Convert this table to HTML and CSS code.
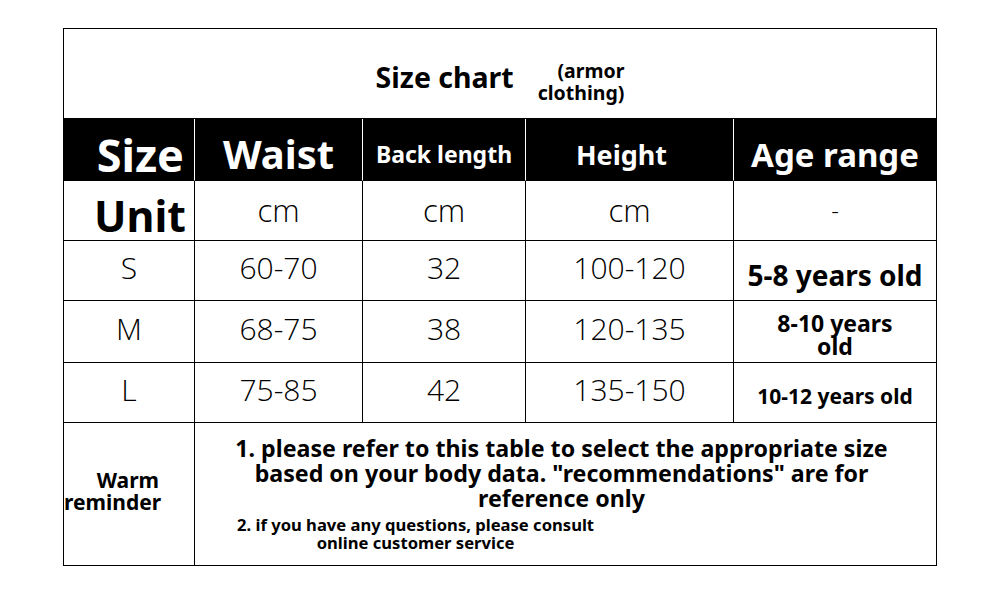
FILE: index.html
```html
<!DOCTYPE html>
<html lang="en">
<head>
<meta charset="utf-8">
<title>Size chart</title>
<link rel="stylesheet" href="styles.css">
</head>
<body>
<div class="page">
  <table class="chart">
    <colgroup>
      <col class="col1"><col class="col2"><col class="col3"><col class="col4"><col class="col5">
    </colgroup>
    <tr class="row-title">
      <td colspan="5" class="title-cell">
        <div class="title">
          <span class="title-main">Size chart</span>
          <span class="title-sub">(armor<br>clothing)</span>
        </div>
      </td>
    </tr>
    <tr class="row-head">
      <th class="h-size">Size</th>
      <th class="h-waist">Waist</th>
      <th class="h-back">Back length</th>
      <th class="h-height">Height</th>
      <th class="h-age">Age range</th>
    </tr>
    <tr class="row-unit">
      <td class="unit-label">Unit</td>
      <td class="val unit-val">cm</td>
      <td class="val unit-val">cm</td>
      <td class="val unit-val">cm</td>
      <td class="val unit-val dash">-</td>
    </tr>
    <tr class="row-s">
      <td class="val">S</td>
      <td class="val">60-70</td>
      <td class="val">32</td>
      <td class="val">100-120</td>
      <td class="age age-s">5-8 years old</td>
    </tr>
    <tr class="row-m">
      <td class="val">M</td>
      <td class="val">68-75</td>
      <td class="val">38</td>
      <td class="val">120-135</td>
      <td class="age age-m">8-10 years<br>old</td>
    </tr>
    <tr class="row-l">
      <td class="val">L</td>
      <td class="val">75-85</td>
      <td class="val">42</td>
      <td class="val">135-150</td>
      <td class="age age-l">10-12 years old</td>
    </tr>
    <tr class="row-note">
      <td class="note-label">Warm<br>reminder</td>
      <td colspan="4" class="note-cell">
        <div class="note-main">1. please refer to this table to select the appropriate size<br>based on your body data. "recommendations" are for<br>reference only</div>
        <div class="note-sub">2. if you have any questions, please consult<br>online customer service</div>
      </td>
    </tr>
  </table>
</div>
</body>
</html>
```

FILE: styles.css
```css
html, body {
  margin: 0;
  padding: 0;
  background: #ffffff;
}

.page {
  padding: 28px 0 0 63px;
}

.chart {
  border-collapse: separate;
  border-spacing: 0;
  table-layout: fixed;
  width: 874px;
  border-top: 1px solid #000;
  border-left: 1px solid #000;
  font-family: "Noto Sans", "Open Sans", sans-serif;
  color: #000;
}

.col1 { width: 131px; }
.col2 { width: 168px; }
.col3 { width: 163px; }
.col4 { width: 208px; }
.col5 { width: 203px; }

.chart td,
.chart th {
  border-right: 1px solid #000;
  border-bottom: 1px solid #000;
  padding: 0;
  text-align: center;
  vertical-align: middle;
  white-space: nowrap;
}

.row-title { height: 90px; }
.row-head { height: 62px; }
.row-unit { height: 60px; }
.row-s { height: 60px; }
.row-m { height: 62px; }
.row-l { height: 60px; }
.row-note { height: 143px; }

/* title */
.title-cell {
  padding-top: 8px !important;
}

.title {
  display: flex;
  justify-content: center;
  align-items: center;
  gap: 24px;
}

.title-main {
  font-size: 28.5px;
  font-weight: 700;
  line-height: 1.1;
}

.title-sub {
  font-size: 19.5px;
  font-weight: 700;
  line-height: 22px;
  text-align: right;
  margin-top: 8px;
}

/* header */
.row-head th {
  background: #000;
  color: #fff;
  font-weight: 700;
  line-height: 1;
  border-right-color: #fff;
  border-bottom-color: #000;
  padding-top: 9px;
}

.row-head th.h-age {
  border-right-color: #000;
}

.h-size {
  font-size: 45px;
  text-align: right !important;
  padding-right: 10px !important;
}

.h-waist { font-size: 40px; }
.h-back { font-size: 23px; }
.h-height { font-size: 27px; padding-right: 16px !important; }
.h-age { font-size: 33px; }

/* unit row */
.unit-label {
  font-size: 43px;
  font-weight: 700;
  line-height: 1;
  text-align: right !important;
  padding-right: 8px !important;
  padding-top: 10px !important;
}

.val {
  font-family: "Open Sans", "Noto Sans", sans-serif;
  font-size: 30px;
  font-weight: 300;
  line-height: 1.1;
  padding-bottom: 6px !important;
}

.unit-val {
  font-size: 31px;
  padding-bottom: 0 !important;
}

.dash {
  font-size: 24px;
}

/* age column */
.age {
  font-weight: 700;
  line-height: 1;
}

.age-s {
  font-size: 28px;
  padding-top: 9px !important;
}

.age-m {
  font-size: 23px;
  line-height: 23px;
  padding-top: 6px !important;
}

.age-l {
  font-size: 21px;
  padding-top: 8px !important;
}

/* warm reminder */
.note-label {
  font-size: 21px;
  font-weight: 700;
  line-height: 22px;
  text-align: right !important;
  padding-right: 35px !important;
  padding-bottom: 6px !important;
}

.note-cell {
  font-weight: 700;
}

.note-main {
  font-size: 23.2px;
  line-height: 25px;
  text-align: center;
  padding-right: 8px;
}

.note-sub {
  width: fit-content;
  margin-top: 5px;
  margin-left: 42px;
  font-size: 16.6px;
  line-height: 18px;
  text-align: center;
}
```
